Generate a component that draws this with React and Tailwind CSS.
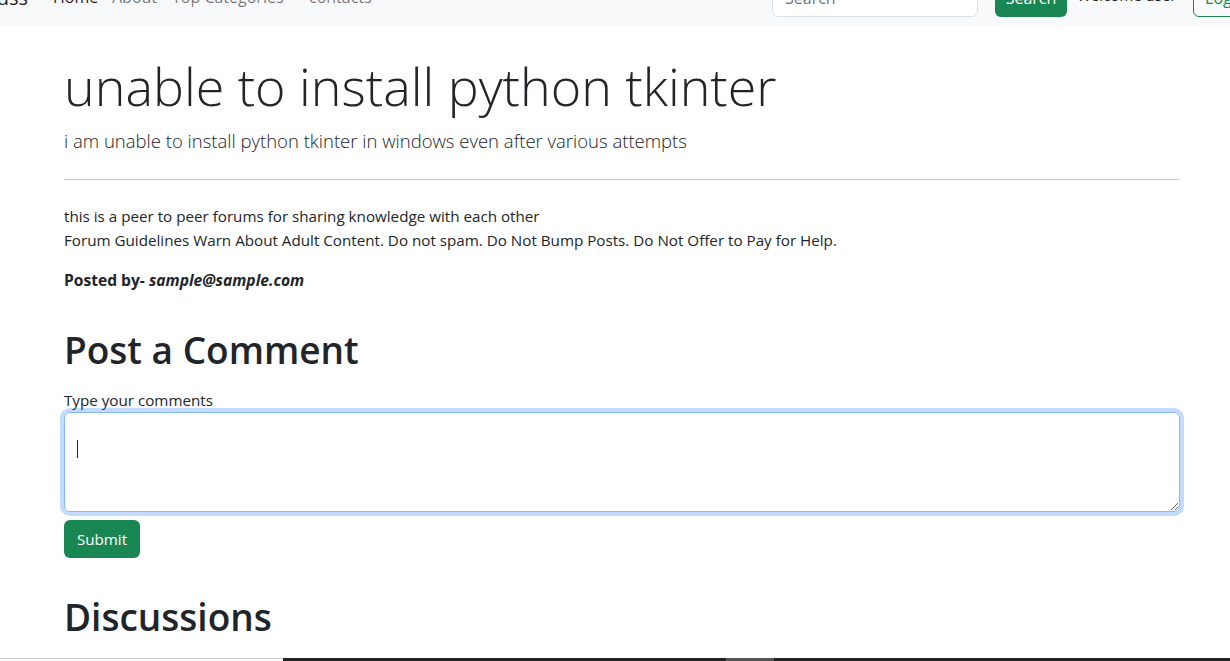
import React from "react";

const font = { fontFamily: '"Open Sans", "Noto Sans", Arial, sans-serif' };

function Navbar() {
  return (
    <nav className="h-[56px] -mt-[30px] bg-[#f8f9fa] flex items-center text-[16px]">
      {/* brand, pushed off the left edge */}
      <div className="w-[28px] shrink-0 flex justify-end">
        <span className="whitespace-nowrap text-[20px] text-[#000000e6]">iDiscuss</span>
      </div>
      <ul className="flex items-center ml-[25px] -mt-[3px]">
        <li className="w-[59px] text-[#000000e6]">Home</li>
        <li className="w-[60px] text-[#0000008c]">About</li>
        <li className="w-[137px] text-[#0000008c]">Top Categories</li>
        <li className="text-[#0000008c]">contacts</li>
      </ul>
      <div className="ml-auto -mr-[39px] flex items-center">
        <input
          type="search"
          placeholder="Search"
          className="w-[206px] h-[38px] px-3 rounded-[6px] border border-[#dee2e6] bg-white placeholder-[#6c757d] outline-none"
        />
        <button className="ml-[17px] w-[72px] h-[38px] rounded-[6px] bg-[#198754] text-white">
          Search
        </button>
        <p className="ml-[10px] w-[106px] -mt-[5px] text-[15px] text-[#212529] whitespace-nowrap">
          Welcome user
        </p>
        <button className="ml-[10px] w-[76px] h-[38px] rounded-[6px] border border-[#198754] text-[#198754]">
          Logout
        </button>
      </div>
    </nav>
  );
}

export default function App() {
  return (
    <div className="min-h-screen bg-white text-[#212529] overflow-hidden" style={font}>
      <Navbar />

      <main className="mx-[64px] w-[1116px]">
        {/* Question */}
        <h1 className="mt-[26px] text-[52px] leading-[67px] font-light whitespace-nowrap">
          unable to install python tkinter
        </h1>
        <p className="mt-[7px] text-[18.5px] leading-[30px] font-light">
          i am unable to install python tkinter in windows even after various attempts
        </p>
        <hr className="mt-[23px] border-t border-[#c8c9ca]" />
        <p className="mt-[24px] text-[15.2px] leading-[24px]">
          this is a peer to peer forums for sharing knowledge with each other
          <br />
          Forum Guidelines Warn About Adult Content. Do not spam. Do Not Bump Posts. Do Not Offer
          to Pay for Help.
        </p>
        <p className="mt-[16px] text-[15.6px] leading-[24px] font-bold">
          Posted by- <em>sample@sample.com</em>
        </p>

        {/* Comment form */}
        <h2 className="mt-[34px] text-[37px] leading-[48px] font-semibold">Post a Comment</h2>
        <form className="mt-[14px]">
          <label className="block text-[15.2px] leading-[24px]">Type your comments</label>
          <div className="relative">
            <textarea
              className="block w-full h-[100px] rounded-[6px] border border-[#86b7fe] shadow-[0_0_0_4px_rgba(13,110,253,0.25)] outline-none resize-y px-3 py-[6px]"
            />
            <span className="absolute left-[13px] top-[28px] w-px h-[18px] bg-[#212529]" />
          </div>
          <button
            type="button"
            className="mt-[8px] w-[76px] h-[38px] rounded-[6px] bg-[#198754] text-white text-[15.2px]"
          >
            Submit
          </button>
        </form>

        <h2 className="mt-[35px] text-[37px] leading-[48px] font-semibold">Discussions</h2>
      </main>

      {/* thin strip at the very bottom of the window */}
      <div className="fixed left-0 right-0 bottom-0 h-[3px] flex">
        <div className="w-[283px] h-px mt-auto mb-[2px] bg-[#c8c8c8]" />
        <div className="w-[443px] bg-[#222222]" />
        <div className="w-[48px] bg-[#555555]" />
        <div className="flex-1 bg-[#222222]" />
      </div>
    </div>
  );
}
